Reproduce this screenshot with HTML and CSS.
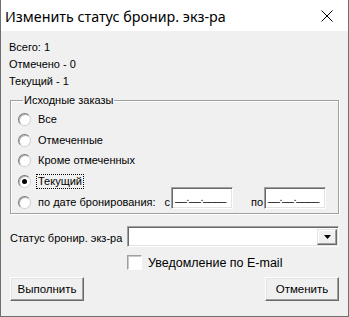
FILE: index.html
```html
<!DOCTYPE html>
<html lang="ru">
<head>
    <meta charset="UTF-8">
    <title>Изменить статус бронир. экз-ра</title>
    <link rel="stylesheet" href="styles.css">
</head>
<body>
    <div class="window">
        <div class="titlebar">
            <span class="title">Изменить статус бронир. экз-ра</span>
            <svg class="close" width="12" height="12" viewBox="0 0 12 12">
                <path d="M0.5 0.5 L11.5 11.5 M11.5 0.5 L0.5 11.5" stroke="#000" stroke-width="1" fill="none"/>
            </svg>
        </div>

        <div class="dialog">
            <div class="stats">
                <div>Всего: 1</div>
                <div>Отмечено - 0</div>
                <div>Текущий - 1</div>
            </div>

            <fieldset class="group">
                <legend>Исходные заказы</legend>
                <div class="radio-row">
                    <span class="radio"></span>
                    <span class="radio-label">Все</span>
                </div>
                <div class="radio-row">
                    <span class="radio"></span>
                    <span class="radio-label">Отмеченные</span>
                </div>
                <div class="radio-row">
                    <span class="radio"></span>
                    <span class="radio-label">Кроме отмеченных</span>
                </div>
                <div class="radio-row">
                    <span class="radio checked"></span>
                    <span class="radio-label focused">Текущий</span>
                </div>
                <div class="radio-row">
                    <span class="radio"></span>
                    <span class="radio-label">по дате бронирования:</span>
                    <div class="dates">
                        <span class="date-prefix">с</span>
                        <span class="date-box">__.__.____</span>
                        <span class="date-prefix second">по</span>
                        <span class="date-box">__.__.____</span>
                    </div>
                </div>
            </fieldset>

            <div class="status-row">
                <span class="status-label">Статус бронир. экз-ра</span>
                <div class="combo">
                    <span class="combo-btn">
                        <svg width="7" height="4" viewBox="0 0 7 4"><path d="M0 0 H7 L3.5 4 Z" fill="#000"/></svg>
                    </span>
                </div>
            </div>

            <div class="check-row">
                <span class="checkbox"></span>
                <span class="check-label">Уведомление по E-mail</span>
            </div>

            <div class="buttons">
                <button class="btn">Выполнить</button>
                <button class="btn">Отменить</button>
            </div>
        </div>
    </div>
</body>
</html>
```

FILE: styles.css
```css
* {
    margin: 0;
    padding: 0;
    box-sizing: border-box;
}

body {
    font-family: 'Liberation Sans', Arial, sans-serif;
    font-size: 11px;
    color: #000;
    background: #f0f0f0;
    white-space: nowrap;
}

.window {
    width: 349px;
    height: 317px;
    border: 1px solid #6f6f6f;
    border-top: none;
    background: #f0f0f0;
    display: flex;
    flex-direction: column;
}

.titlebar {
    height: 31px;
    background: #fff;
    display: flex;
    align-items: center;
    justify-content: space-between;
    padding: 0 15px 0 4px;
}

.title {
    font-family: 'Noto Sans', 'Open Sans', sans-serif;
    font-size: 14.3px;
    padding-top: 1px;
}

.close {
    display: block;
}

.dialog {
    padding: 8px 9px 0 8px;
}

.stats div {
    line-height: 17px;
}

.group {
    margin-top: 3px;
    margin-left: 1px;
    border: 1px solid #a0a0a0;
    box-shadow: inset 1px 1px 0 #fff, 1px 1px 0 #fff;
    padding: 2px 12px 1px 7px;
}

.group legend {
    margin-left: 5px;
    padding: 0 1px;
    line-height: 14px;
}

.radio-row {
    height: 20.7px;
    display: flex;
    align-items: center;
}

.radio {
    width: 13px;
    height: 13px;
    border-radius: 50%;
    background: #fff;
    border: 1px solid;
    border-color: #7a7a7a #d0d0d0 #d0d0d0 #7a7a7a;
    box-shadow: inset 1px 1px 0 #b5b5b5;
    display: flex;
    align-items: center;
    justify-content: center;
    flex-shrink: 0;
}

.radio.checked::after {
    content: "";
    width: 5px;
    height: 5px;
    border-radius: 50%;
    background: #000;
}

.radio-label {
    margin-left: 5px;
    padding: 0 1px;
    border: 1px dotted transparent;
    line-height: 13px;
}

.radio-label.focused {
    border-color: #000;
}

.dates {
    margin-left: auto;
    display: flex;
    align-items: center;
}

.date-prefix {
    margin-right: 1px;
}

.date-prefix.second {
    margin-left: 18px;
}

.date-box {
    width: 62px;
    height: 22px;
    margin-bottom: 9px;
    background: #fff;
    border: 1px solid;
    border-color: #a0a0a0 #fff #fff #a0a0a0;
    box-shadow: inset 1px 1px 0 #696969, inset -1px -1px 0 #e3e3e3;
    font-size: 11px;
    line-height: 14px;
    padding: 2px 0 0 3px;
    letter-spacing: -0.4px;
}

.status-row {
    margin-top: 12px;
    display: flex;
    align-items: center;
}

.status-label {
    width: 119px;
    padding-left: 1px;
    padding-top: 2px;
}

.combo {
    flex: 1;
    height: 21px;
    margin-left: -1px;
    background: #fff;
    border: 1px solid;
    border-color: #a0a0a0 #fff #fff #a0a0a0;
    box-shadow: inset 1px 1px 0 #696969, inset -1px -1px 0 #e3e3e3;
    display: flex;
    justify-content: flex-end;
    padding: 2px 1px 1px 0;
}

.combo-btn {
    width: 20px;
    background: #f0f0f0;
    border: 1px solid;
    border-color: #e3e3e3 #696969 #696969 #e3e3e3;
    box-shadow: inset -1px -1px 0 #a0a0a0, inset 1px 1px 0 #fff;
    display: flex;
    align-items: center;
    justify-content: center;
}

.combo-btn svg {
    display: block;
}

.check-row {
    margin-top: 8px;
    margin-left: 118px;
    display: flex;
    align-items: center;
    gap: 6px;
}

.check-label {
    font-size: 12.5px;
}

.checkbox {
    width: 15px;
    height: 15px;
    background: #fff;
    border: 1px solid;
    border-color: #a0a0a0 #fff #fff #a0a0a0;
    box-shadow: inset 1px 1px 0 #c8c8c8;
}

.buttons {
    margin-top: 7px;
    display: flex;
    justify-content: space-between;
    padding-left: 1px;
}

.btn {
    width: 74px;
    height: 24px;
    font-family: 'Liberation Sans', Arial, sans-serif;
    font-size: 11.5px;
    color: #000;
    background: #f0f0f0;
    border: 1px solid;
    border-color: #fff #696969 #696969 #fff;
    box-shadow: inset -1px -1px 0 #a0a0a0, inset 1px 1px 0 #e3e3e3;
}
```
